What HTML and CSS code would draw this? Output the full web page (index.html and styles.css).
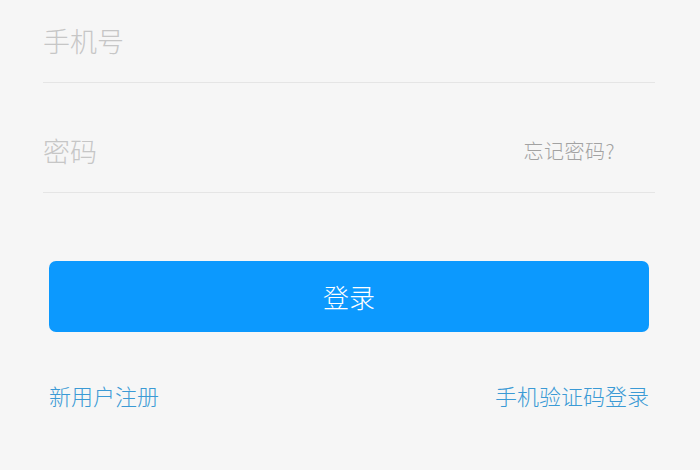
FILE: index.html
```html
<!DOCTYPE html>
<html lang="zh-CN">
<head>
<meta charset="utf-8">
<link rel="stylesheet" href="styles.css">
</head>
<body>
<div class="page">
  <div class="fields">
    <div class="field field-phone">
      <span class="placeholder">手机号</span>
    </div>
    <div class="field field-pass">
      <span class="placeholder">密码</span>
      <span class="forgot">忘记密码?</span>
    </div>
  </div>
  <div class="actions">
    <button class="login-btn">登录</button>
    <div class="links">
      <span class="link">新用户注册</span>
      <span class="link">手机验证码登录</span>
    </div>
  </div>
</div>
</body>
</html>
```

FILE: styles.css
```css
html, body {
  margin: 0;
  padding: 0;
  background: #f6f6f6;
}
body {
  width: 700px;
  height: 470px;
  overflow: hidden;
  font-family: "Noto Sans CJK SC", "Noto Sans", sans-serif;
}
.page {
  display: flex;
  flex-direction: column;
}
.fields {
  margin: 0 45px 0 43px;
  display: flex;
  flex-direction: column;
}
.field {
  display: flex;
  align-items: flex-end;
  justify-content: space-between;
  border-bottom: 1px solid #e5e5e5;
  box-sizing: border-box;
  padding-bottom: 26px;
}
.field-phone {
  height: 83px;
}
.field-pass {
  height: 110px;
}
.placeholder {
  font-size: 27px;
  line-height: 30px;
  color: #c6c6c6;
  font-weight: 300;
}
.forgot {
  font-size: 20px;
  line-height: 30px;
  color: #a2a2a2;
  margin-right: 40px;
  font-weight: 300;
  letter-spacing: 0.5px;
}
.actions {
  margin: 68px 51px 0 49px;
  display: flex;
  flex-direction: column;
}
.login-btn {
  height: 71px;
  border: none;
  border-radius: 7px;
  background: #0c99fe;
  color: #ffffff;
  font-family: "Noto Sans CJK SC", "Noto Sans", sans-serif;
  font-size: 26px;
  font-weight: 300;
  padding: 0;
}
.links {
  margin-top: 48px;
  display: flex;
  justify-content: space-between;
}
.link {
  font-size: 22px;
  line-height: 30px;
  color: #3b9ad5;
  font-weight: 300;
}
```
